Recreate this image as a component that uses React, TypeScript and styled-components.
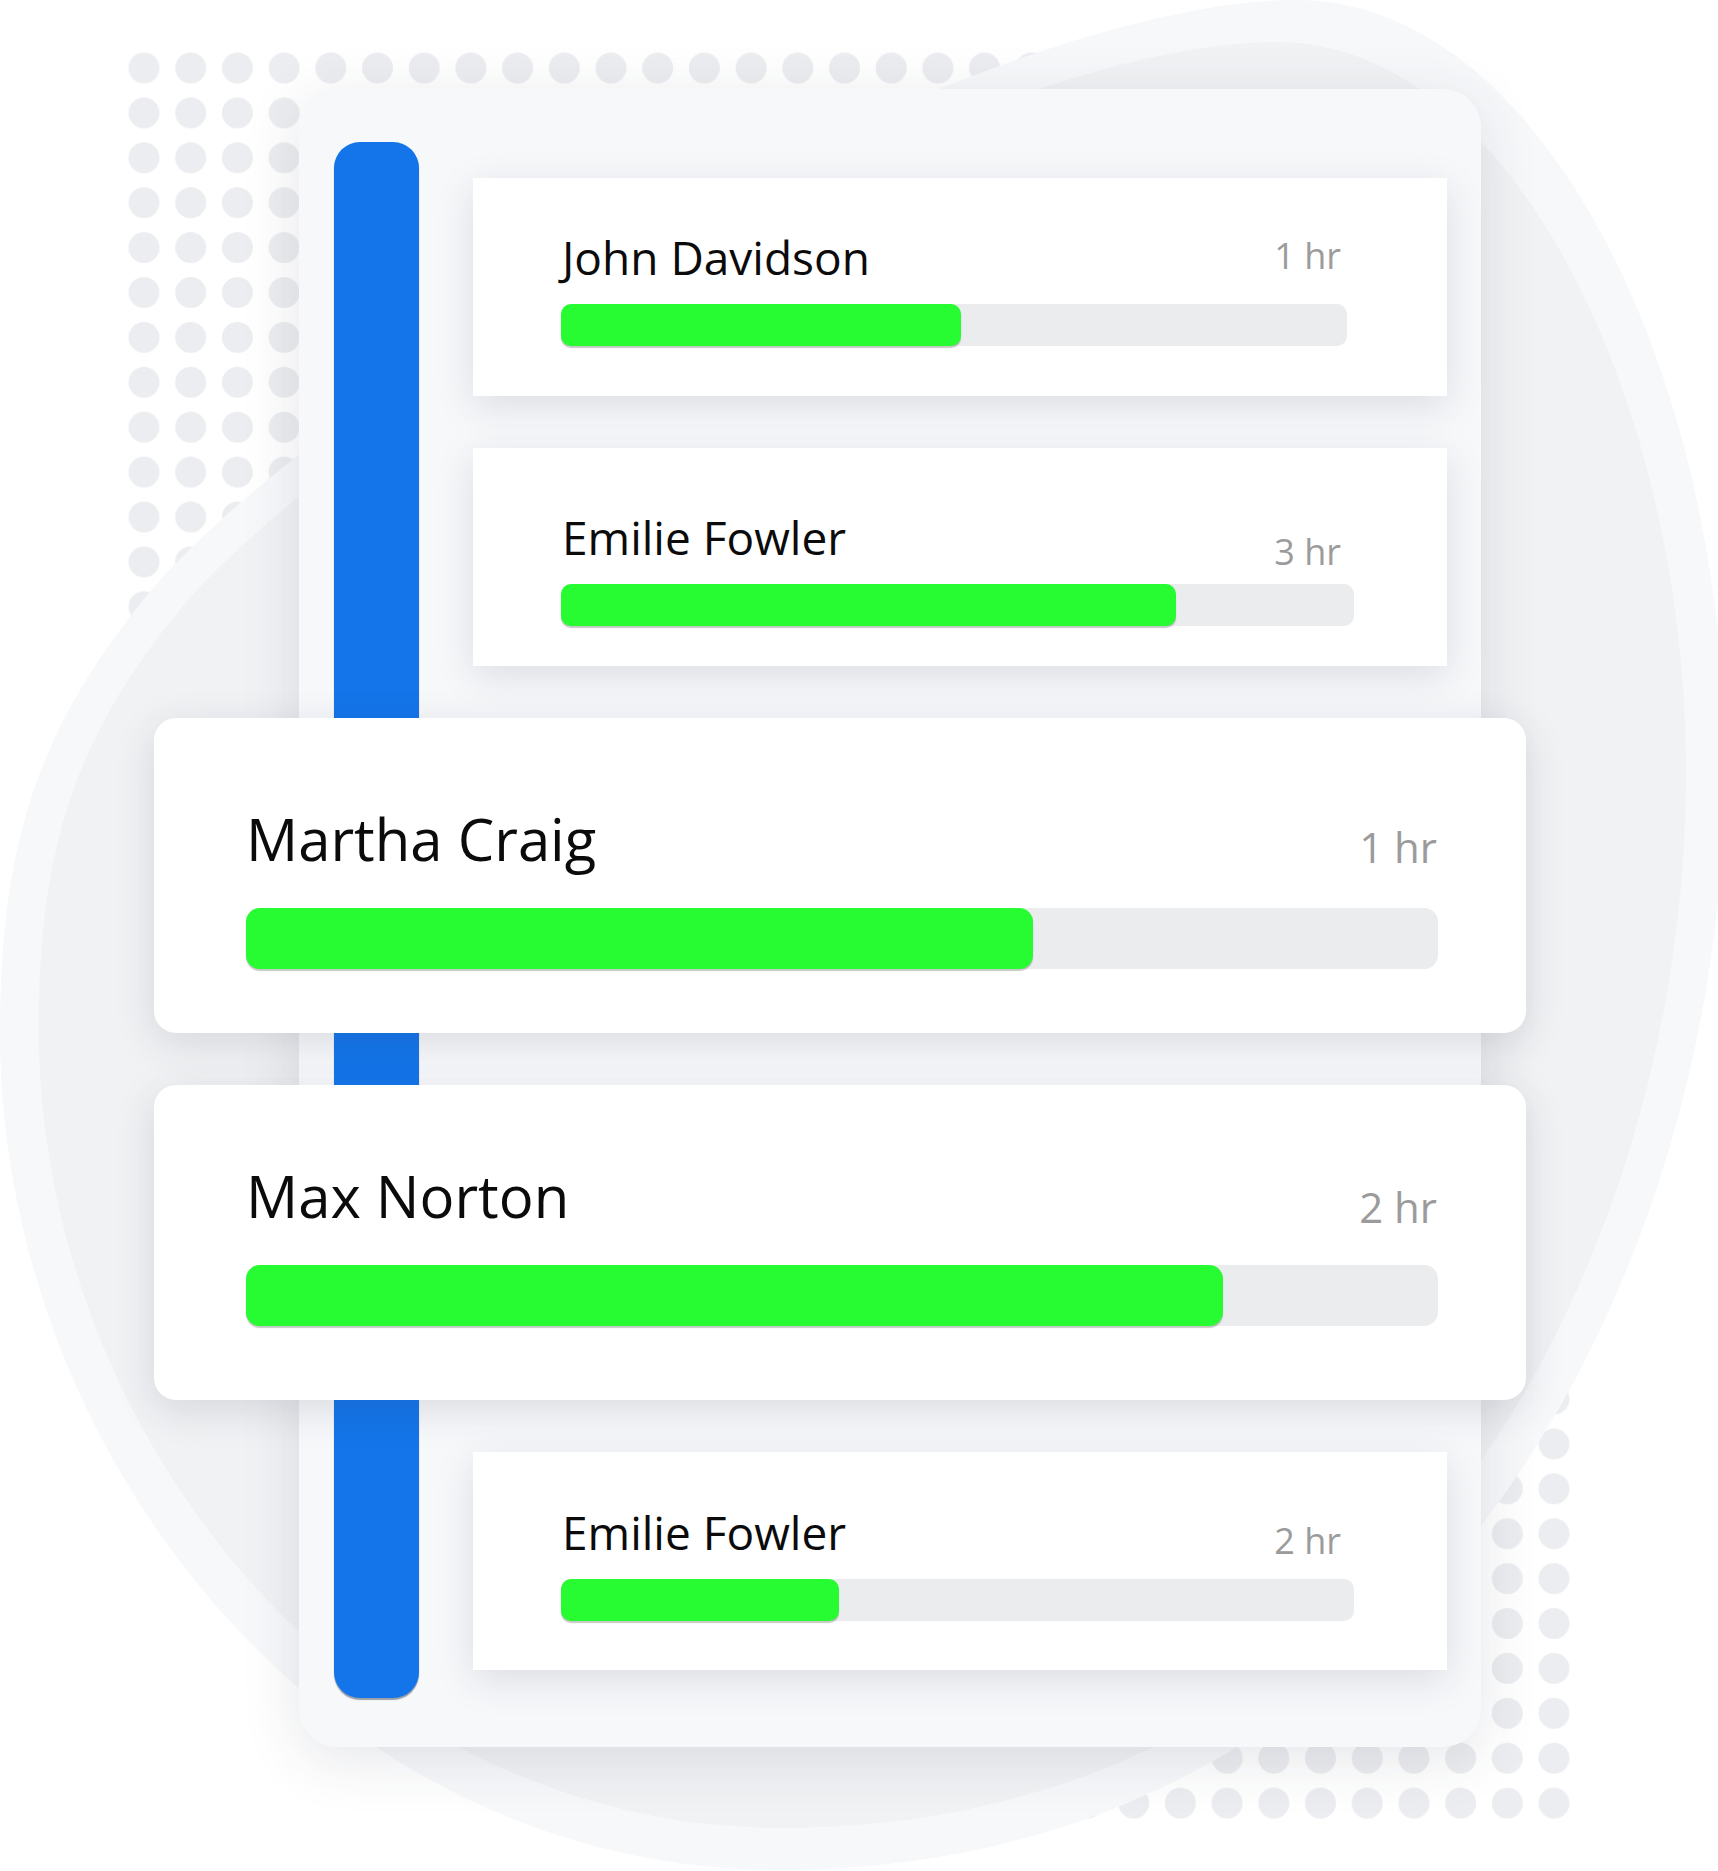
import React from 'react';
import styled, { createGlobalStyle } from 'styled-components';

const GlobalStyle = createGlobalStyle`
  body {
    margin: 0;
    background: #ffffff;
    font-family: 'Open Sans', 'Noto Sans', sans-serif;
  }
`;

type Row = {
  name: string;
  hours: string;
  pct: number;
  top: number;
  lift: number;
  trim?: number;
  big?: boolean;
};

const rows: Row[] = [
  { name: 'John Davidson', hours: '1 hr', pct: 50.9, top: 56, lift: 6, trim: 7 },
  { name: 'Emilie Fowler', hours: '3 hr', pct: 77.6, top: 66, lift: -10 },
  { name: 'Martha Craig', hours: '1 hr', pct: 66, top: 92, lift: 0, big: true },
  { name: 'Max Norton', hours: '2 hr', pct: 82, top: 82, lift: -3, big: true },
  { name: 'Emilie Fowler', hours: '2 hr', pct: 35, top: 57, lift: -4 },
];

const BLOB =
  'M 1296 0 C 1545 0 1725 380 1725 765 C 1725 1280 1420 1870 779 1870 ' +
  'C 330 1870 0 1460 0 1032 C 0 840 40 720 160 580 C 380 340 1000 0 1296 0 Z';

function Backdrop() {
  return (
    <Decor viewBox='0 0 1718 1871' width='1718' height='1871'>
      <defs>
        <pattern id='dotsA' patternUnits='userSpaceOnUse' x='120.65' y='45.55' width='46.7' height='44.9'>
          <circle cx='23.35' cy='22.45' r='15.5' fill='#ecedf0' />
        </pattern>
        <pattern id='dotsB' patternUnits='userSpaceOnUse' x='1063.65' y='1376.55' width='46.7' height='44.9'>
          <circle cx='23.35' cy='22.45' r='15.5' fill='#ecedf0' />
        </pattern>
      </defs>
      <rect x='120.65' y='45.55' width={46.7 * 26} height={44.9 * 13} fill='url(#dotsA)' />
      <rect x={1063.65 - 46.7 * 6} y='1376.55' width={46.7 * 17} height={44.9 * 10} fill='url(#dotsB)' />
      <path d={BLOB} fill='#f7f8fa' />
      <path d={BLOB} fill='#f1f2f4' transform='translate(860 935) scale(0.955) translate(-860 -935)' />
    </Decor>
  );
}

function Entry({ row }: { row: Row }) {
  const Card = row.big ? BigCard : SmallCard;
  return (
    <Card $top={row.top}>
      <Header $big={row.big}>
        <Name $big={row.big}>{row.name}</Name>
        <Hours $big={row.big} $lift={row.lift}>
          {row.hours}
        </Hours>
      </Header>
      <Track $big={row.big} $trim={row.trim ?? 0}>
        <Fill style={{ width: `${row.pct}%` }} />
      </Track>
    </Card>
  );
}

export default function App() {
  return (
    <>
      <GlobalStyle />
      <Page>
        <Backdrop />
        <Panel>
          <Rail />
          <Column>
            {rows.map((row, i) => (
              <Entry key={i} row={row} />
            ))}
          </Column>
        </Panel>
      </Page>
    </>
  );
}

const Page = styled.div`
  position: relative;
  width: 1718px;
  height: 1871px;
  overflow: hidden;
  background: #ffffff;
`;

const Decor = styled.svg`
  position: absolute;
  left: 0;
  top: 0;
  z-index: 0;
`;

const Panel = styled.div`
  position: relative;
  z-index: 1;
  display: flex;
  width: 1182px;
  margin: 89px 0 0 299px;
  background: #f7f8fa;
  border-radius: 38px;
  box-shadow: 0 12px 60px rgba(40, 50, 70, 0.12);
`;

const Rail = styled.div`
  flex: none;
  width: 85px;
  margin: 53px 0 49px 35px;
  background: #1475ea;
  border-radius: 26px;
  box-shadow: 0 2px 1px rgba(40, 50, 70, 0.45);
`;

const Column = styled.div`
  display: flex;
  flex-direction: column;
  gap: 52px;
  width: 974px;
  margin-left: 54px;
  padding: 89px 0 77px;
`;

const SmallCard = styled.div<{ $top: number }>`
  height: 218px;
  box-sizing: border-box;
  padding: ${(p) => p.$top}px 93px 0 88px;
  background: #ffffff;
  box-shadow: 0 10px 36px rgba(40, 50, 70, 0.13);
`;

const BigCard = styled.div<{ $top: number }>`
  position: relative;
  z-index: 2;
  width: 1372px;
  height: 315px;
  box-sizing: border-box;
  margin-left: -319px;
  padding: ${(p) => p.$top}px 88px 0 92px;
  background: #ffffff;
  border-radius: 22px;
  box-shadow: 0 10px 40px rgba(40, 50, 70, 0.14);
`;

const Header = styled.div<{ $big?: boolean }>`
  display: flex;
  justify-content: space-between;
  align-items: flex-end;
  padding-left: ${(p) => (p.$big ? 0 : 1)}px;
  padding-right: ${(p) => (p.$big ? 1 : 13)}px;
`;

const Name = styled.span<{ $big?: boolean }>`
  font-size: ${(p) => (p.$big ? 58 : 46)}px;
  line-height: 1;
  color: #0b0b0b;
`;

const Hours = styled.span<{ $big?: boolean; $lift: number }>`
  font-size: ${(p) => (p.$big ? 42 : 36)}px;
  line-height: 1;
  color: #9b9b9b;
  margin-bottom: ${(p) => p.$lift}px;
`;

const Track = styled.div<{ $big?: boolean; $trim: number }>`
  height: ${(p) => (p.$big ? 61 : 42)}px;
  margin-top: ${(p) => (p.$big ? 40 : 24)}px;
  margin-right: ${(p) => p.$trim}px;
  background: #ebecee;
  border-radius: ${(p) => (p.$big ? 14 : 10)}px;
`;

const Fill = styled.div`
  height: 100%;
  background: #27fb31;
  border-radius: inherit;
  box-shadow: 0 2px 1px rgba(40, 60, 40, 0.28);
`;
